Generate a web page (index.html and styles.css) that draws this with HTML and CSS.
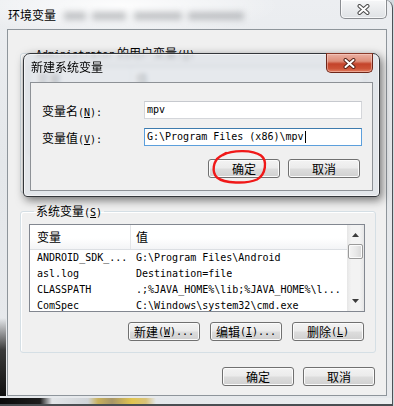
FILE: index.html
```html
<!DOCTYPE html>
<html lang="zh-CN">
<head>
<meta charset="utf-8">
<title>环境变量</title>
<link rel="stylesheet" href="styles.css">
</head>
<body>
<div class="win">
  <div class="titlebar">
    <span class="title">环境变量</span>
    <span class="haze"></span>
    <div class="close-grey">
      <svg width="13" height="11" viewBox="0 0 13 11"><path d="M2.5 2 L10.5 9 M10.5 2 L2.5 9" stroke="#4a4a4a" stroke-width="4" stroke-linecap="round"/><path d="M2.5 2 L10.5 9 M10.5 2 L2.5 9" stroke="#fff" stroke-width="2" stroke-linecap="round"/></svg>
    </div>
  </div>

  <div class="client">
    <fieldset class="group user">
      <legend><span class="m">Administrator</span> 的用户变量<span class="m">(<u>U</u>)</span></legend>
      <div class="list">
        <div class="cols">
          <div class="head"><div class="h1">变量</div><div class="h2">值</div></div>
        </div>
      </div>
      <div class="btnrow">
        <div class="btn"></div>
        <div class="btn"></div>
        <div class="btn"></div>
      </div>
    </fieldset>

    <fieldset class="group sys">
      <legend>系统变量<span class="m">(<u>S</u>)</span></legend>
      <div class="list">
        <div class="cols">
          <div class="head"><div class="h1">变量</div><div class="h2">值</div></div>
          <div class="row"><div class="c1 m">ANDROID_SDK_...</div><div class="c2 m">G:\Program Files\Android</div></div>
          <div class="row"><div class="c1 m">asl.log</div><div class="c2 m">Destination=file</div></div>
          <div class="row"><div class="c1 m">CLASSPATH</div><div class="c2 m">.;%JAVA_HOME%\lib;%JAVA_HOME%\l...</div></div>
          <div class="row"><div class="c1 m">ComSpec</div><div class="c2 m">C:\Windows\system32\cmd.exe</div></div>
        </div>
        <div class="sb">
          <div class="arrow"><svg width="7" height="4" viewBox="0 0 7 4"><polygon points="0,4 3.5,0 7,4" fill="#3c3c3c"/></svg></div>
          <div class="thumb"></div>
          <div class="arrow down"><svg width="7" height="4" viewBox="0 0 7 4"><polygon points="0,0 7,0 3.5,4" fill="#3c3c3c"/></svg></div>
        </div>
      </div>
      <div class="btnrow">
        <div class="btn">新建<span class="m">(<u>W</u>)...</span></div>
        <div class="btn">编辑<span class="m">(<u>I</u>)...</span></div>
        <div class="btn">删除<span class="m">(<u>L</u>)</span></div>
      </div>
    </fieldset>

    <div class="okrow">
      <div class="btn">确定</div>
      <div class="btn">取消</div>
    </div>
  </div>
  <div class="bottom"></div>

  <div class="dialog">
    <div class="dtitle">
      <span class="t">新建系统变量</span>
      <div class="close-red">
        <svg width="13" height="11" viewBox="0 0 13 11"><path d="M2.5 2 L10.5 9 M10.5 2 L2.5 9" stroke="#5a2418" stroke-width="4" stroke-linecap="round"/><path d="M2.5 2 L10.5 9 M10.5 2 L2.5 9" stroke="#fff" stroke-width="2" stroke-linecap="round"/></svg>
      </div>
    </div>
    <div class="dclient">
      <div class="frow">
        <div class="lbl">变量名<span class="m">(<u>N</u>):</span></div>
        <div class="tb"><span class="m">mpv</span></div>
      </div>
      <div class="frow second">
        <div class="lbl">变量值<span class="m">(<u>V</u>):</span></div>
        <div class="tb focus"><span class="m">G:\Program Files (x86)\mpv</span><span class="caret"></span></div>
      </div>
      <div class="dbtns">
        <div class="okwrap">
          <div class="btn">确定</div>
          <svg class="circle" width="58" height="36" viewBox="0 0 58 36"><path d="M12 6 C22 0.5, 42 1, 50 6.5 C56.5 11.5, 55 25.5, 46 30.5 C36 35, 13 34.5, 6 28.5 C0.5 23, 2 12, 9 7.5 L15 4" fill="none" stroke="#f01818" stroke-width="2.4" stroke-linecap="round"/></svg>
        </div>
        <div class="btn">取消</div>
      </div>
    </div>
  </div>
</div>
</body>
</html>
```
FILE: styles.css
```css
* { box-sizing: border-box; margin: 0; padding: 0; }
html, body { width: 394px; height: 406px; overflow: hidden; }
body {
  background: #d3d9de;
  font-family: "Noto Sans CJK SC", "Liberation Sans", sans-serif;
  font-size: 12px;
  color: #000;
}
.m {
  font-family: "DejaVu Sans Mono", "Liberation Mono", monospace;
  font-size: 10px;
}
u { text-decoration: underline; text-underline-offset: 1px; }

.win {
  position: relative;
  width: 393px;
  height: 406px;
  display: flex;
  flex-direction: column;
  border-right: 1px solid #4d5257;
  border-top-right-radius: 8px;
  background:
    linear-gradient(180deg, rgba(0,0,0,0) 0, rgba(0,0,0,0) 318px, #3a3a3a 350px, #0c0c0c 400px) left top / 6px 100% no-repeat,
    radial-gradient(ellipse 160px 30px at 120px 6px, rgba(255,255,255,.9), rgba(255,255,255,0)),
    linear-gradient(180deg, #eceef1, #e4e7ea 40%, #e8eaed);
}

.titlebar {
  height: 29px;
  display: flex;
  align-items: flex-start;
  padding-left: 8px;
}
.title { margin-top: 8px; line-height: 14px; }
.haze {
  width: 180px;
  height: 8px;
  margin: 12px 0 0 8px;
  background: linear-gradient(90deg, #8a8d91 0 22px, rgba(0,0,0,0) 22px 28px, #8a8d91 28px 62px, rgba(0,0,0,0) 62px 70px, #8a8d91 70px 118px, rgba(0,0,0,0) 118px 124px, #8a8d91 124px 180px);
  filter: blur(3px);
  opacity: .5;
}
.close-grey {
  margin-left: auto;
  margin-right: 5px;
  width: 47px;
  height: 19px;
  border: 1px solid #8a8d91;
  border-top: none;
  border-radius: 0 0 5px 5px;
  background: linear-gradient(180deg, #f6f7f8, #e9ebed 55%, #dfe2e5);
  box-shadow: inset 0 0 0 1px rgba(255,255,255,.7);
  display: flex;
  align-items: center;
  justify-content: center;
}

.client {
  width: 380px;
  height: 367px;
  margin-left: 7px;
  border: 1px solid #8e959b;
  background: #f0f0f0;
  padding: 17px 10px 0 12px;
}

.group {
  width: 356px;
  border: 1px solid #d5dfe5;
  border-radius: 3px;
  box-shadow: inset 1px 1px 0 #fff;
  padding: 7px 10px 11px 8px;
}
.group legend {
  margin-left: 5px;
  padding: 0 2px;
  line-height: 12px;
  height: 12px;
  white-space: nowrap;
}
.group.user { padding-bottom: 9px; }
.group.sys { margin-top: 12px; }

.list {
  width: 336px;
  height: 88px;
  border: 1px solid #828790;
  background: #fff;
  display: flex;
  overflow: hidden;
}
.cols { flex: 1; min-width: 0; }
.head {
  height: 25px;
  display: flex;
  border-bottom: 1px solid #dcdfe3;
  background: linear-gradient(180deg, #fff 0, #fff 55%, #f3f4f6 100%);
  line-height: 24px;
}
.h1 { width: 101px; padding-left: 7px; border-right: 1px solid #e3e5e8; }
.h2 { padding-left: 5px; }
.row { height: 16px; line-height: 16px; display: flex; white-space: nowrap; }
.c1 { width: 106px; padding-left: 7px; flex: none; }
.c2 { overflow: hidden; }

.sb {
  width: 17px;
  flex: none;
  display: flex;
  flex-direction: column;
  align-items: center;
  background: linear-gradient(90deg, #e6e6e6, #f3f3f3 25%, #f3f3f3 75%, #e6e6e6);
}
.arrow { height: 17px; width: 17px; display: flex; align-items: center; justify-content: center; padding-top: 3px; }
.arrow.down { margin-top: auto; padding-top: 0; padding-bottom: 4px; }
.thumb {
  width: 15px;
  height: 15px;
  margin-top: 2px;
  border: 1px solid #9a9a9a;
  border-radius: 2px;
  background: linear-gradient(90deg, #f4f4f4, #e9e9e9 50%, #d8d8d8);
  box-shadow: inset 0 0 0 1px #fbfbfb;
}

.btnrow {
  display: flex;
  justify-content: flex-end;
  gap: 10px;
  margin-top: 10px;
  margin-right: 1px;
}
.okrow {
  display: flex;
  justify-content: flex-end;
  gap: 9px;
  margin-top: 14px;
  padding-right: 1px;
}
.btn {
  width: 72px;
  height: 19px;
  border: 1px solid #707070;
  border-radius: 3px;
  background: linear-gradient(180deg, #f3f3f3 0%, #ebebeb 48%, #dddddd 52%, #d0d0d0 100%);
  box-shadow: inset 0 0 0 1px #fbfbfb;
  display: flex;
  align-items: center;
  justify-content: center;
  line-height: 14px;
  white-space: nowrap;
}

.bottom {
  height: 10px;
  border-top: 2px solid #e6e9ec;
  border-bottom: 2px solid #4a4e52;
  background: linear-gradient(90deg, #0a0a0a 0, #1e1e1e 40px, #e2e5e8 52px, #d0d4d8 88px, #c9b15c 98px, #a89668 112px, #e1c44f 132px, #d8c27a 146px, #e4e7ea 156px, #eceef0 100%);
}

.dialog {
  position: absolute;
  left: 23px;
  top: 53px;
  width: 357px;
  height: 144px;
  border: 1px solid #33363a;
  border-radius: 7px 7px 4px 4px;
  background: rgba(224, 228, 232, .8);
  backdrop-filter: blur(2px);
  box-shadow: inset 0 0 0 1px rgba(255,255,255,.55), 2px 3px 10px rgba(0,0,0,.55);
  padding: 0 6px 5px 6px;
  display: flex;
  flex-direction: column;
}
.dtitle {
  height: 28px;
  display: flex;
  align-items: flex-start;
}
.dtitle .t { margin: 6px 0 0 1px; line-height: 14px; }
.close-red {
  margin-left: auto;
  margin-top: -1px;
  width: 47px;
  height: 20px;
  border: 1px solid #6e2619;
  border-top-color: #8a3a2a;
  border-radius: 0 0 5px 5px;
  background: linear-gradient(180deg, #eab0a2 0%, #de8d78 40%, #c4432a 55%, #cc5236 80%, #e27e62 100%);
  box-shadow: inset 0 0 0 1px rgba(255,220,210,.45);
  display: flex;
  align-items: center;
  justify-content: center;
}
.dclient {
  height: 109px;
  border: 1px solid #8d9196;
  background: #f0f0f0;
  padding: 18px 10px 12px 11px;
}
.frow { display: flex; align-items: center; height: 18px; }
.frow.second { margin-top: 9px; }
.lbl { width: 102px; flex: none; white-space: nowrap; }
.tb {
  width: 218px;
  height: 18px;
  border: 1px solid #d4d6da;
  border-top-color: #c6c9ce;
  background: #fff;
  padding-left: 2px;
  line-height: 16px;
  display: flex;
  align-items: center;
  white-space: nowrap;
}
.tb.focus { border-color: #5c9fdc; border-top-color: #3d7bad; }
.caret { width: 1px; height: 12px; background: #000; margin-left: 1px; }
.dbtns {
  display: flex;
  justify-content: flex-end;
  gap: 8px;
  margin-top: 13px;
  margin-right: 2px;
}
.okwrap { position: relative; }
.circle { position: absolute; left: 3px; top: -10px; pointer-events: none; }
```
